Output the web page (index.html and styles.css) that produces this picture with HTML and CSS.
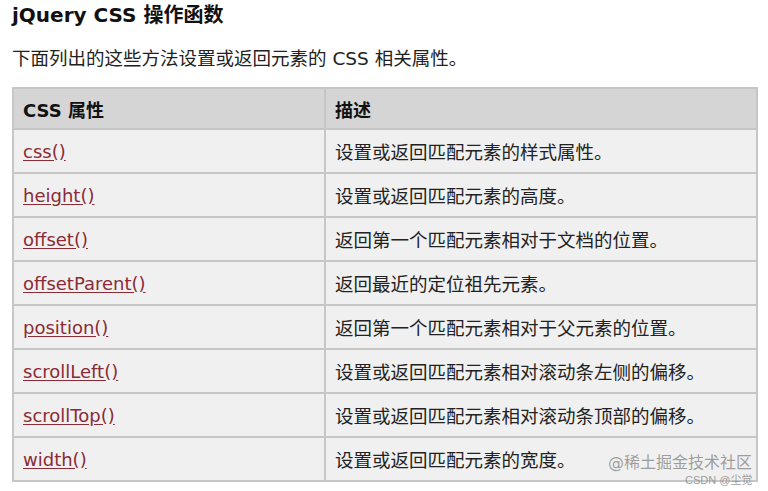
FILE: index.html
```html
<!DOCTYPE html>
<html lang="zh">
<head>
<meta charset="utf-8">
<title>jQuery CSS 操作函数</title>
<link rel="stylesheet" href="styles.css">
</head>
<body>
<div class="page">
  <h2 class="title">jQuery CSS 操作函数</h2>
  <p class="intro">下面列出的这些方法设置或返回元素的 CSS 相关属性。</p>
  <table class="ref">
    <thead>
      <tr><th class="c1">CSS 属性</th><th class="c2">描述</th></tr>
    </thead>
    <tbody>
      <tr><td><a href="#">css()</a></td><td>设置或返回匹配元素的样式属性。</td></tr>
      <tr><td><a href="#">height()</a></td><td>设置或返回匹配元素的高度。</td></tr>
      <tr><td><a href="#">offset()</a></td><td>返回第一个匹配元素相对于文档的位置。</td></tr>
      <tr><td><a href="#">offsetParent()</a></td><td>返回最近的定位祖先元素。</td></tr>
      <tr><td><a href="#">position()</a></td><td>返回第一个匹配元素相对于父元素的位置。</td></tr>
      <tr><td><a href="#">scrollLeft()</a></td><td>设置或返回匹配元素相对滚动条左侧的偏移。</td></tr>
      <tr><td><a href="#">scrollTop()</a></td><td>设置或返回匹配元素相对滚动条顶部的偏移。</td></tr>
      <tr><td><a href="#">width()</a></td><td>设置或返回匹配元素的宽度。</td></tr>
    </tbody>
  </table>
  <div class="watermark">
    <span class="wm-main">@稀土掘金技术社区</span>
    <span class="wm-sub">CSDN @尘觉</span>
  </div>
</div>
</body>
</html>
```

FILE: styles.css
```css
html, body {
  margin: 0;
  padding: 0;
  background: #ffffff;
}
body {
  font-family: "DejaVu Sans", "Noto Sans CJK SC", sans-serif;
  color: #1a1a1a;
}
.page {
  position: relative;
  width: 768px;
  height: 491px;
  padding: 0 10px 0 12px;
  box-sizing: border-box;
}
.title {
  margin: 0;
  padding-top: 2px;
  font-size: 20px;
  line-height: 26px;
  font-weight: bold;
  color: #111;
}
.intro {
  margin: 18px 0 0 0;
  font-size: 18.5px;
  line-height: 26px;
  color: #222;
}
.ref {
  margin-top: 15px;
  width: 746px;
  border-collapse: collapse;
  font-size: 18.5px;
  table-layout: fixed;
}
.ref th, .ref td {
  border: 2px solid #c6c6c6;
  text-align: left;
  padding: 0 0 0 9px;
  vertical-align: middle;
}
.ref th {
  background: #d5d5d5;
  height: 39px;
  font-weight: bold;
  font-size: 18px;
  color: #111;
}
.ref th.c1 { width: 301px; }
.ref td {
  background: #f0f0f0;
  height: 42px;
  color: #222;
}
.ref a {
  color: #8a2b35;
  font-size: 18px;
  text-decoration: underline;
  text-underline-offset: 2px;
}
.watermark {
  position: absolute;
  left: 606px;
  top: 451px;
  width: 150px;
  height: 36px;
}
.wm-main {
  position: absolute;
  left: 2px;
  top: 2px;
  font-size: 16px;
  line-height: 20px;
  color: rgba(120, 120, 120, 0.7);
  white-space: nowrap;
}
.wm-sub {
  position: absolute;
  left: 79px;
  top: 23px;
  font-size: 11px;
  line-height: 12px;
  color: rgba(140, 140, 140, 0.85);
  white-space: nowrap;
  font-family: "Liberation Sans", "Noto Sans CJK SC", sans-serif;
}
```
